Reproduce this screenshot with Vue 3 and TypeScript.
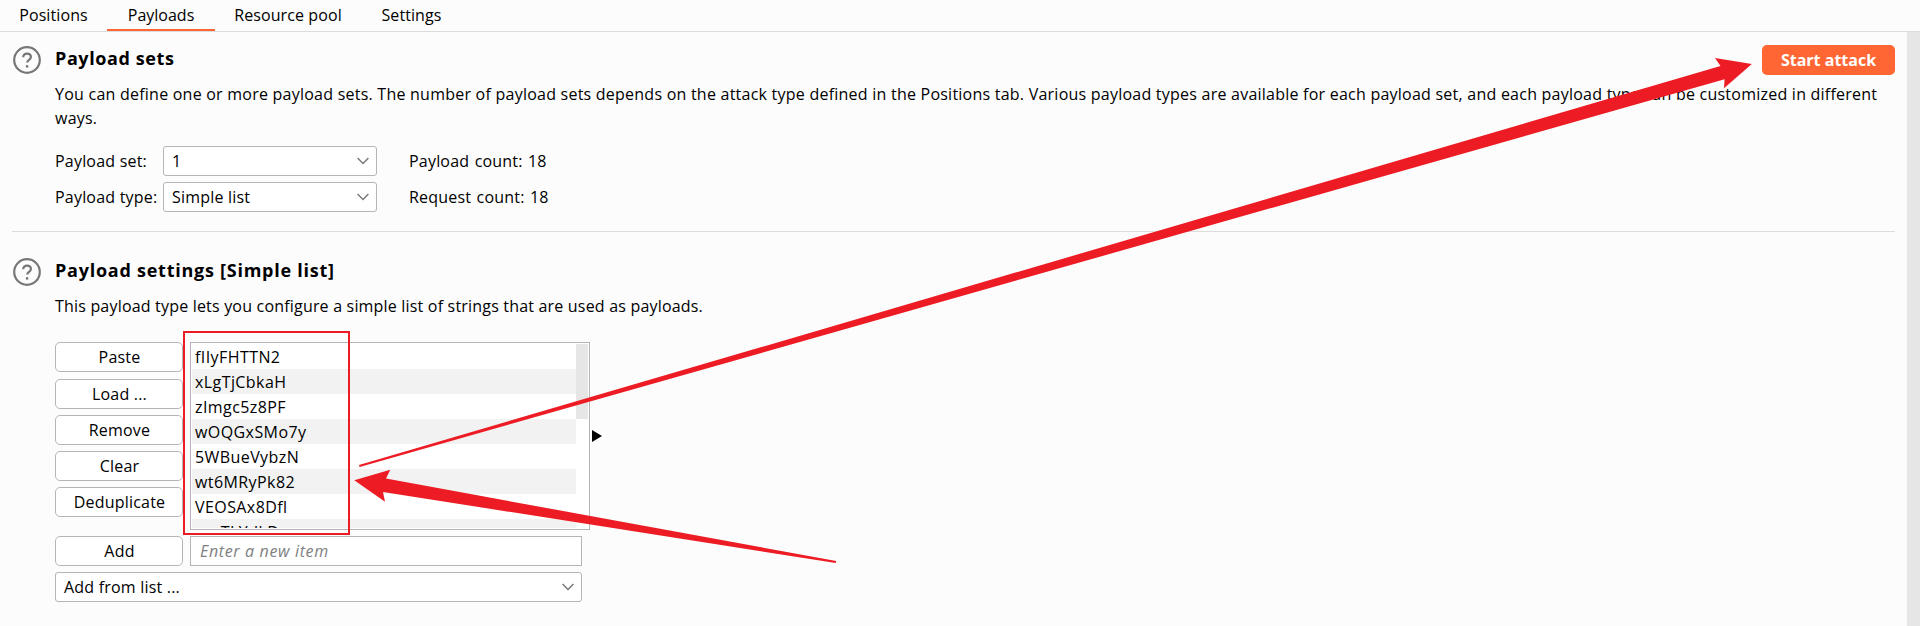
<script setup lang="ts">
interface Tab { label: string; key: string }

const tabs: Tab[] = [
  { label: 'Positions', key: 'positions' },
  { label: 'Payloads', key: 'payloads' },
  { label: 'Resource pool', key: 'pool' },
  { label: 'Settings', key: 'settings' },
]
const activeTab = 'payloads'

const selectors = [
  { label: 'Payload set:', value: '1', count: 'Payload count: 18' },
  { label: 'Payload type:', value: 'Simple list', count: 'Request count: 18' },
]
const actions = ['Paste', 'Load ...', 'Remove', 'Clear', 'Deduplicate']
const payloads = [
  'fIIyFHTTN2', 'xLgTjCbkaH', 'zImgc5z8PF', 'wOQGxSMo7y',
  '5WBueVybzN', 'wt6MRyPk82', 'VEOSAx8Dfl', 'vacTLYdkDs',
]
</script>

<template>
  <div class="window">
    <nav class="tabs">
      <div v-for="t in tabs" :key="t.key" class="tab" :class="[t.key, { active: t.key === activeTab }]">{{ t.label }}</div>
    </nav>

    <div class="body">
      <main class="content">
        <section class="section first">
          <svg class="help" viewBox="0 0 28 28">
            <circle cx="14" cy="14" r="12.8" />
            <path d="M10.2 11.3C10.2 9 11.8 7.6 14 7.6s3.9 1.3 3.9 3.4c0 2.8-3.7 2.9-3.7 5.6" />
            <circle class="dot" cx="14.1" cy="20.4" r="1.3" />
          </svg>
          <div class="main">
            <header class="head">
              <h2 class="title">Payload sets</h2>
              <button class="start">Start attack</button>
            </header>
            <p class="desc">You can define one or more payload sets. The number of payload sets depends on the attack type defined in the Positions tab. Various payload types are available for each payload set, and each payload type can be customized in different ways.</p>
            <div class="form">
              <template v-for="s in selectors" :key="s.label">
                <span class="label">{{ s.label }}</span>
                <div class="select">
                  <span>{{ s.value }}</span>
                  <svg class="chevron" viewBox="0 0 12 8"><path d="M.6 1 6 6.6 11.4 1" /></svg>
                </div>
                <span class="count">{{ s.count }}</span>
              </template>
            </div>
          </div>
        </section>

        <section class="section second">
          <svg class="help" viewBox="0 0 28 28">
            <circle cx="14" cy="14" r="12.8" />
            <path d="M10.2 11.3C10.2 9 11.8 7.6 14 7.6s3.9 1.3 3.9 3.4c0 2.8-3.7 2.9-3.7 5.6" />
            <circle class="dot" cx="14.1" cy="20.4" r="1.3" />
          </svg>
          <div class="main">
            <header class="head">
              <h2 class="title wide">Payload settings [Simple list]</h2>
            </header>
            <p class="desc">This payload type lets you configure a simple list of strings that are used as payloads.</p>
            <div class="editor">
              <div class="actions">
                <button v-for="a in actions" :key="a" class="btn">{{ a }}</button>
              </div>
              <div class="list">
                <ul class="rows">
                  <li v-for="p in payloads" :key="p">{{ p }}</li>
                </ul>
                <div class="track"><div class="thumb"></div></div>
              </div>
              <svg class="expand" viewBox="0 0 10 12"><path d="M0 0 10 6 0 12Z" /></svg>
            </div>
            <div class="add">
              <button class="btn">Add</button>
              <div class="input">Enter a new item</div>
            </div>
            <div class="select from">
              <span>Add from list ...</span>
              <svg class="chevron" viewBox="0 0 12 8"><path d="M.6 1 6 6.6 11.4 1" /></svg>
            </div>
          </div>
        </section>
      </main>
      <div class="scroll"></div>
    </div>

    <svg class="marks" viewBox="0 0 1920 626">
      <rect x="184" y="332" width="165" height="202" />
      <path d="M359 465 1720.5 66 1715 58 1751.8 64 1724 88.3 1724.6 79.3 359.6 467Z" />
      <path d="M354.3 480.2 390.3 469.8 386 478.6 836.2 561 835.8 563 383 492 385 501.8Z" />
    </svg>
  </div>
</template>

<style>
body { margin: 0; background: #fcfcfc; }
</style>

<style scoped>
* { box-sizing: border-box; }
.window {
  position: relative;
  width: 1920px;
  height: 626px;
  overflow: hidden;
  display: flex;
  flex-direction: column;
  background: #fcfcfc;
  color: #000;
  font: 16px/24px "Open Sans", "Noto Sans", sans-serif;
  letter-spacing: 0.2px;
}
.tabs { display: flex; height: 32px; border-bottom: 1px solid #dcdcdc; }
.tab { height: 31px; line-height: 30px; text-align: center; letter-spacing: 0.1px; }
.tab.positions { width: 107px; }
.tab.payloads { width: 108px; letter-spacing: 0; }
.tab.pool { width: 146px; }
.tab.settings { width: 101px; }
.tab.active { border-bottom: 2px solid #ff6633; }
.body { flex: 1; display: flex; justify-content: space-between; }
.content { width: 1895px; padding-left: 12px; }
.scroll { width: 13px; background: #e6e6e6; }
.section { display: flex; }
.first { height: 200px; padding-top: 13px; border-bottom: 1px solid #dcdcdc; }
.second { padding-top: 26px; }
.help { flex: none; width: 28px; height: 28px; margin: 1px 14px 0 1px; fill: none; stroke: #777; stroke-width: 2.2; }
.second .help { margin-top: 0; }
.help .dot { fill: #777; stroke: none; }
.main { flex: 1; }
.head { display: flex; justify-content: space-between; height: 37px; }
.title { margin: 0; font-size: 18px; line-height: 26px; font-weight: 700; letter-spacing: 0.6px; }
.title.wide { letter-spacing: 0.75px; }
.second .title { line-height: 25px; }
.desc { margin: 0; line-height: 23px; letter-spacing: 0.235px; }
.first .desc { line-height: 24px; margin-bottom: -2px; }
.second .desc { letter-spacing: 0.19px; }
button { font: inherit; letter-spacing: inherit; color: inherit; padding: 0; border: 0; }
.start { width: 133px; height: 30px; border-radius: 5px; background: #ff6633; color: #fff; font-weight: 700; letter-spacing: 0; }
.form { display: grid; grid-template-columns: 108px 214px auto; grid-auto-rows: 30px; row-gap: 6px; margin-top: 18px; align-items: center; }
.count { padding-left: 32px; letter-spacing: 0.2px; word-spacing: 1px; }
.select { display: flex; align-items: center; justify-content: space-between; height: 30px; padding: 0 7px 0 8px; border: 1px solid #b8b4b6; border-radius: 3px; background: #fff; }
.chevron { width: 12px; height: 8px; fill: none; stroke: #777; stroke-width: 1.4; }
.editor { display: flex; margin-top: 24px; height: 188px; }
.actions { display: flex; flex-direction: column; gap: 6px; width: 128px; margin-right: 7px; }
.btn { width: 128px; height: 30px; flex: none; padding-left: 1px; border: 1px solid #b8b4b6; border-radius: 5px; background: #fff; }
.actions .btn:first-child { margin-bottom: 1px; }
.list { display: flex; width: 400px; padding: 1px; border: 1px solid #b8b4b6; background: #fff; }
.rows { flex: 1; margin: 0; padding: 0; list-style: none; overflow: hidden; }
.rows li { height: 25px; padding-left: 3px; line-height: 26px; letter-spacing: 0.42px; }
.rows li:nth-child(even) { background: #f2f2f2; }
.track { width: 12px; }
.thumb { height: 75px; background: #e6e6e6; }
.expand { width: 10px; height: 12px; margin: 88px 0 0 2px; }
.add { display: flex; gap: 7px; margin-top: 6px; }
.input { width: 392px; height: 30px; padding-left: 9px; line-height: 29px; border: 1px solid #b8b4b6; background: #fff; color: #808080; font-style: italic; letter-spacing: 0.65px; }
.select.from { width: 527px; margin-top: 6px; }
.marks { position: absolute; inset: 0; width: 1920px; height: 626px; pointer-events: none; fill: #ed1c24; }
.marks rect { fill: none; stroke: #ed1c24; stroke-width: 2; }
</style>
